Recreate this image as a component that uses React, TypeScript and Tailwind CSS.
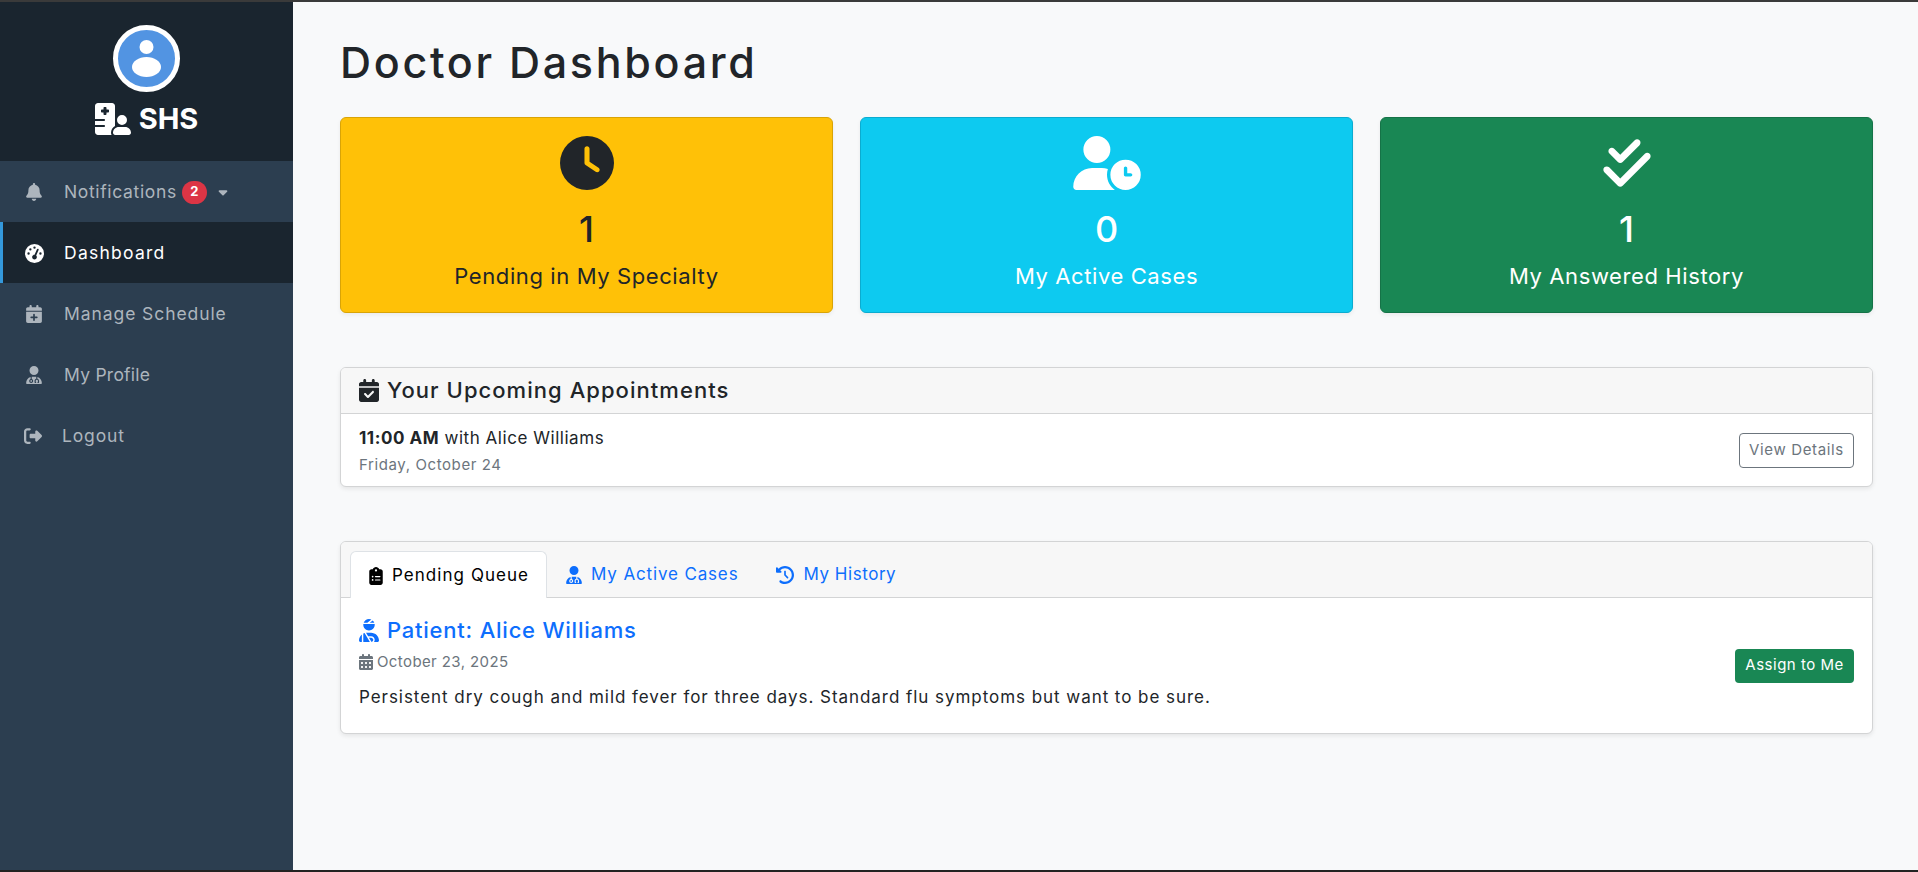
import React from "react";
import {
  FaHospitalUser, FaBell, FaGaugeHigh, FaCalendarPlus, FaUserDoctor, FaRightFromBracket,
  FaClock, FaUserClock, FaCheckDouble, FaCalendarCheck, FaClipboardList, FaClockRotateLeft,
  FaUserInjured, FaCalendarDays, FaCaretDown,
} from "react-icons/fa6";

const font = { fontFamily: '"Inter", "Open Sans", sans-serif' };

function NavItem({ icon, label, active, extra, iconCls, track }: { icon: React.ReactNode; label: string; active?: boolean; extra?: React.ReactNode; iconCls?: string; track: string }) {
  return (
    <div className={"flex h-[61px] items-center border-l-[3px] pl-[22px] pt-[1px] text-[17.5px] " + (active ? "border-[#3498db] bg-[#1a252f] text-white" : "border-transparent text-[#adb5bd]")}>
      <span className={iconCls ?? "flex w-[39px] text-[18px]"}>{icon}</span>
      <span className={track}>{label}</span>
      {extra}
    </div>
  );
}

function Stat({ bg, border, color, icon, value, label }: { bg: string; border: string; color: string; icon: React.ReactNode; value: string; label: string }) {
  return (
    <div className={"flex h-[196px] flex-col items-center rounded-[6px] border pt-[18px] shadow-[0_2px_4px_rgba(0,0,0,0.06)] " + bg + " " + border + " " + color}>
      <div className="flex h-[54px] items-center text-[54px]">{icon}</div>
      <div className="mt-[17px] text-[36px] font-medium leading-[44px]">{value}</div>
      <div className="mt-[10px] text-[22px] leading-[30px] tracking-[0.6px]">{label}</div>
    </div>
  );
}

export default function App() {
  return (
    <div style={font} className="flex h-[872px] flex-col overflow-hidden bg-[#f8f9fa] text-[#212529]">
      <div className="h-[2px] shrink-0 bg-[#3a3a3a]" />
      <div className="flex min-h-0 flex-1">
        <aside className="w-[293px] shrink-0 bg-[#2c3e50]">
          <div className="flex h-[159px] flex-col items-center bg-[#1a252f] pt-[23px]">
            <div className="flex h-[67px] w-[67px] items-center justify-center rounded-full border-[5px] border-white bg-[#5294e2]">
              <svg viewBox="0 0 57 57" className="h-[57px] w-[57px]" fill="#fff">
                <circle cx="28.5" cy="17" r="7" />
                <ellipse cx="28.5" cy="37" rx="14.5" ry="10" />
              </svg>
            </div>
            <div className="mt-[10px] flex items-center gap-[8px] text-[29px] font-bold leading-[32px] text-white">
              <FaHospitalUser className="h-[32px] w-[36px]" />
              <span className="pt-[1px]">SHS</span>
            </div>
          </div>
          <nav>
            <NavItem icon={<FaBell />} label="Notifications" track="tracking-[0.65px]" extra={
              <>
                <span className="ml-[5px] flex h-[23px] w-[25px] items-center justify-center rounded-full bg-[#dc3545] text-[13px] font-bold tracking-normal text-white">2</span>
                <FaCaretDown className="ml-[9px] text-[14px]" />
              </>
            } />
            <NavItem active icon={<FaGaugeHigh />} label="Dashboard" track="tracking-[1.25px]" iconCls="flex w-[39px] text-[19px] text-white" />
            <NavItem icon={<FaCalendarPlus />} label="Manage Schedule" track="tracking-[0.92px]" />
            <NavItem icon={<FaUserDoctor />} label="My Profile" track="tracking-[0.25px]" />
            <NavItem icon={<FaRightFromBracket />} label="Logout" track="tracking-[0.85px]" iconCls="-ml-[1px] flex w-[38px] text-[18px]" />
          </nav>
        </aside>
        <main className="min-w-0 flex-1 pl-[47px] pr-[45px]">
          <h1 className="mt-[36px] text-[43px] font-medium leading-[48px] tracking-[2.7px]">Doctor Dashboard</h1>
          <div className="mt-[31px] grid grid-cols-3 gap-[27px]">
            <Stat bg="bg-[#ffc107]" border="border-[#d9a406]" color="text-[#212529]" icon={<FaClock />} value="1" label="Pending in My Specialty" />
            <Stat bg="bg-[#0dcaf0]" border="border-[#0bacd0]" color="text-white" icon={<FaUserClock className="h-[54px] w-[68px]" />} value="0" label="My Active Cases" />
            <Stat bg="bg-[#198754]" border="border-[#157347]" color="text-white" icon={<FaCheckDouble />} value="1" label="My Answered History" />
          </div>

          <section className="mt-[54px] overflow-hidden rounded-[6px] border border-[#d3d4d5] bg-white shadow-[0_2px_4px_rgba(0,0,0,0.08)]">
            <div className="flex h-[46px] items-center gap-[8px] border-b border-[#d3d4d5] bg-[#f7f7f7] px-[18px] text-[22px] font-medium tracking-[1.05px]">
              <FaCalendarCheck className="h-[23px] w-[20px]" />
              <span>Your Upcoming Appointments</span>
            </div>
            <div className="flex h-[72px] items-center justify-between px-[18px]">
              <div>
                <div className="text-[17px] leading-[24px] tracking-[0.54px]"><b className="font-bold">11:00 AM</b> with Alice Williams</div>
                <div className="mt-[4px] text-[15px] leading-[21px] tracking-[0.6px] text-[#6c757d]">Friday, October 24</div>
              </div>
              <button className="flex h-[35px] w-[115px] items-center justify-center rounded-[4px] border border-[#6c757d] text-[15px] tracking-[0.64px] text-[#6c757d]">View Details</button>
            </div>
          </section>

          <section className="mt-[54px] overflow-hidden rounded-[6px] border border-[#d3d4d5] bg-white shadow-[0_2px_4px_rgba(0,0,0,0.08)]">
            <div className="flex h-[56px] items-end border-b border-[#d3d4d5] bg-[#f7f7f7] pl-[9px]">
              <div className="-mb-px flex h-[47px] items-center gap-[9px] rounded-t-[6px] border border-b-0 border-[#dee2e6] bg-white pl-[18px] pr-[17px] pt-[2px] text-[17px] tracking-[1.05px] text-black">
                <FaClipboardList className="h-[18px] w-[14px]" /> Pending Queue
              </div>
              <div className="flex h-[47px] items-center gap-[9px] pl-[19px] pr-[18px] pt-[2px] text-[17px] tracking-[0.85px] text-[#0d6efd]">
                <FaUserDoctor className="h-[18px] w-[16px]" /> My Active Cases
              </div>
              <div className="flex h-[47px] items-center gap-[8px] pl-[19px] pr-[18px] pt-[2px] text-[17px] tracking-[0.54px] text-[#0d6efd]">
                <FaClockRotateLeft className="h-[18px] w-[20px]" /> My History
              </div>
            </div>
            <div className="flex h-[135px] items-start justify-between px-[18px]">
              <div className="pt-[17px]">
                <div className="flex items-center gap-[8px] text-[22px] font-medium leading-[30px] tracking-[0.77px] text-[#0d6efd]">
                  <FaUserInjured className="h-[23px] w-[20px]" /> Patient: Alice Williams
                </div>
                <div className="mt-[6px] flex items-center gap-[4px] text-[15px] leading-[21px] tracking-[0.4px] text-[#6c757d]">
                  <FaCalendarDays className="h-[16px] w-[14px]" /> October 23, 2025
                </div>
                <div className="mt-[13px] text-[17px] leading-[24px] tracking-[0.95px]">Persistent dry cough and mild fever for three days. Standard flu symptoms but want to be sure.</div>
              </div>
              <button className="flex h-[34px] w-[119px] items-center justify-center self-center rounded-[4px] bg-[#198754] text-[15px] tracking-[0.5px] text-white">Assign to Me</button>
            </div>
          </section>
        </main>
      </div>
      <div className="h-[2px] shrink-0 bg-[#222222]" />
    </div>
  );
}
